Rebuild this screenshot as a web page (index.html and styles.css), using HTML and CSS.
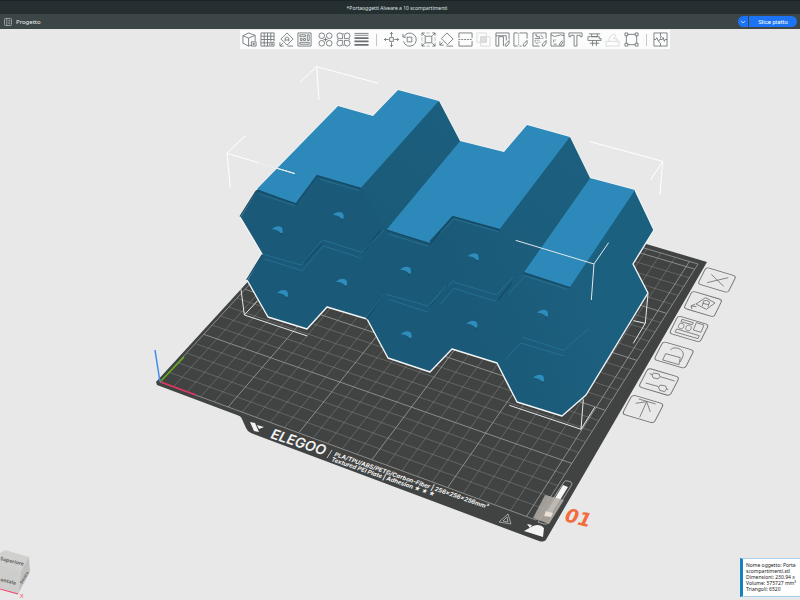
FILE: index.html
```html
<!DOCTYPE html>
<html lang="it">
<head>
<meta charset="utf-8">
<meta name="viewport" content="width=device-width, initial-scale=1">
<title>*Portaoggetti Alveare a 10 scompartimenti</title>
<link rel="stylesheet" href="styles.css">
</head>
<body>
<header class="titlebar"><h1 class="title">*Portaoggetti Alveare a 10 scompartimenti</h1></header>
<nav class="navbar">
  <a class="tab" href="#progetto">
    <svg class="tab-icon" viewBox="0 0 8 8"><rect x=".5" y=".5" width="7" height="7" rx="1"/><path d="M2.8.5v7M4.3 2.3h2M4.3 4h2M4.3 5.7h2"/></svg>
    Progetto
  </a>
  <div class="slice">
    <button class="slice-menu" type="button" aria-label="Opzioni"><svg viewBox="0 0 8 8"><path d="M2 3.2 4 4.8 6 3.2"/></svg></button>
    <button class="slice-run" type="button">Slice piatto</button>
  </div>
</nav>
<main class="workspace" id="progetto">
  <svg class="scene" viewBox="0 29 800 571" preserveAspectRatio="xMinYMin meet">
    <!-- build plate -->
    <path class="plate" d="M157 385 156 382 360 159 707 262 547 538Q545 543 539 541L251 433Q247 431 246 428L242 419Q241 416 237 415Z"/>
    <g id="grid"></g>
    <path class="axis-z" d="M160 382 155 350"/>
    <path class="axis-y" d="M161 381 184 357"/>
    <path class="axis-x" d="M161 382 196 395"/>

    <!-- plate print -->
    <g class="print">
      <path d="M250 422 255 423 259 432 254 431ZM257 425 264 427 259 429Z"/>
      <text class="brand" transform="translate(270 438) rotate(18)">ELEGOO</text>
      <path class="rule" d="M332 450 327 458"/>
      <text class="spec" transform="translate(334 456) rotate(19)">PLA/TPU/ABS/PETG/Carbon-Fiber | 256×256×256mm³</text>
      <text class="spec" transform="translate(331 461) rotate(19)">Textured PEI Plate | Adhesion ★ ★ ★</text>
      <path class="thin" d="M499 522 508 514 511 524ZM503 521 507 517 508 522Z"/>
      <path d="M524 531 533 526Q540 523 544 528L543 537ZM527 524 532 525 530 528Z"/>
      <path class="thin" d="M538 522 564 482Q565 480 568 481L571 482Q573 483 571 486L549 522Q547 525 544 524Z"/>
      <path d="M563 485 568 487 552 513 547 511Z"/>
      <path class="purge" d="M533 518 545 495 564 500 549 524Z"/>
      <path class="purge-tip" d="M546 511 553 513 551 517 544 516Z"/>
    </g>
    <text class="plate-number" transform="translate(564 521) rotate(14)">01</text>

    <!-- controls lying beside the plate -->
    <g class="plate-tool">
      <rect x="-15" y="-10" width="30" height="20" rx="3" transform="matrix(1 .3 -.42 .83 717 280)"/>
      <rect x="-15" y="-10" width="30" height="20" rx="3" transform="matrix(1 .3 -.43 .86 703 304)"/>
      <rect x="-15" y="-10" width="30" height="20" rx="3" transform="matrix(1.02 .3 -.44 .88 689 329)"/>
      <rect x="-15" y="-10" width="30" height="20" rx="3" transform="matrix(1.03 .3 -.46 .9 674 355)"/>
      <rect x="-15" y="-10" width="30" height="20" rx="3" transform="matrix(1.04 .31 -.48 .93 659 382)"/>
      <rect x="-15" y="-10" width="30" height="20" rx="3" transform="matrix(1.05 .31 -.5 .96 643 409)"/>
      <g transform="translate(610 230) scale(.3333)">
        <path d="M304 133 341 169M355 143 291 158"/>
        <path d="M287 203 315 219 289 238 258 222ZM277 228 281 213Q290 208 299 216L294 230M278 220 296 224M259 230 243 228 246 237M243 228 256 222"/>
        <path d="M216 268 250 278 247 284 213 275ZM259 278 282 285 273 307 250 300ZM200 297 268 317 264 326 195 306ZM206 286A8 7 0 1 0 221 290 8 7 0 1 0 206 286M228 292A8 7 0 1 0 243 296 8 7 0 1 0 228 292"/>
        <path d="M167 371 211 383 207 404 158 390ZM181 360Q192 348 211 358 226 367 216 386L211 396"/>
        <path d="M119 431 129 434M150 440 194 453M131 429 147 432 150 440 144 447 129 443 126 435ZM107 459 146 470M170 477 175 479M151 465 167 468 170 477 164 485 149 481 146 472Z"/>
        <path d="M86 507 137 522M110 515 89 562M77 520 110 515 121 546"/>
      </g>
    </g>

    <!-- honeycomb model -->
    <defs>
      <linearGradient id="body" gradientUnits="userSpaceOnUse" x1="470" y1="330" x2="600" y2="290">
        <stop offset="0" stop-color="#1b5978"/><stop offset="1" stop-color="#1c607f"/>
      </linearGradient>
      <linearGradient id="side" x1="0" y1="1" x2="1" y2="0">
        <stop offset="0" stop-color="#1b5a79"/><stop offset="1" stop-color="#1c607f"/>
      </linearGradient>
      <g id="knob"><path class="knob-side" d="M2-4 15-4 11 19Z"/><path class="knob-top" d="M-17-2Q-3-16 13-8 17-4 16 8L10 10Q2-2-17-2Z"/></g>
    </defs>
    <path class="model" fill="url(#body)" d="M398 90 439 101 460 141 504 152 527 125 570 137 590 178 635 190 654 230 633 264 648 293 586 395 562 416 517 402 497 363 452 349 430 372 388 358 367 319 327 307 307 329 268 317 247 280 262 254 240 217 257 189 338 106 373 116Z"/>
    <g class="top">
      <path d="M257 189 338 106 373 116 398 90 439 101 361 188 317 175 296 204Z"/>
      <path d="M460 141 504 152 527 125 570 137 500 229 453 216 430 243 386 230Z"/>
      <path d="M590 178 635 190 570 287 524 272Z"/>
    </g>
    <path fill="url(#side)" d="M439 101 460 141 386 230 361 188ZM570 137 590 178 524 272 500 229Z"/>
    <g transform="translate(215 50) scale(.3333)">
      <path class="shade" d="M125 421 243 462 306 377 437 415M513 540 645 582 714 500M142 614 95 690M75 500 125 421M265 640 322 580M448 603 497 540M455 808 500 741M643 770 700 705"/>
      <path class="seam" d="M133 432 240 467M315 388 432 422M142 612 258 645 323 570 440 607 508 540M148 627 262 662 325 588 440 625M513 733 640 768 718 690M520 748 638 786M455 800 505 735M520 552 640 589"/>
      <use href="#knob" x="187" y="540"/><use href="#knob" x="370" y="497"/><use href="#knob" x="572" y="661"/>
      <use href="#knob" x="380" y="697"/><use href="#knob" x="203" y="731"/><use href="#knob" x="574" y="855"/>
      <path class="bounds faint" d="M255 97 305 50 490 100M305 50 312 150M90 258 36 310 240 371M36 310 46 412"/>
      <path class="bounds" d="M78 718 88 795 277 858M88 795 128 752M130 338 240 371"/>
    </g>
    <g transform="translate(430 100) scale(.3333)">
      <path class="shade" d="M0 425 68 350 210 390M280 519 420 564M205 600 245 548"/>
      <path class="seam" d="M30 400 72 357 205 395M0 612 50 555M72 546 200 585 250 530M32 612 72 565 197 604M235 583 285 528 412 568M278 712 402 751 475 687M225 780 272 729 402 768"/>
      <use href="#knob" x="130" y="471"/><use href="#knob" x="126" y="673"/><use href="#knob" x="338" y="640"/><use href="#knob" x="326" y="835"/>
      <path class="bounds faint" d="M480 125 698 184 662 240M698 184 690 285"/>
      <path class="bounds" d="M257 421 492 492 536 428M492 492 484 600M460 898 453 988 238 916M453 988 494 922M654 582 646 670 610 662M646 670 610 730"/>
    </g>

    <!-- orientation cube -->
    <g class="cube">
      <path class="cube-top" d="M0 553 5 550 29 557 21 571 0 566Z"/>
      <path class="cube-front" d="M0 565 21 571 18 594 0 588Z"/>
      <path class="cube-side" d="M21 571 29 557 30 572 18 594Z"/>
      <text transform="translate(0 560) rotate(14)">Superiore</text>
      <text transform="translate(0 581) rotate(14)">ontale</text>
      <text class="cube-small" transform="translate(22 584) rotate(-60)">Destra</text>
      <path class="cube-axis" d="M0 589 18 594"/>
      <text class="cube-x" x="20" y="598">X</text>
    </g>
  </svg>

  <div class="toolbar" role="toolbar" aria-label="Strumenti">
    <button type="button" aria-label="Aggiungi"><svg viewBox="0 0 16 16"><path d="M1 4 7 1l7 2.5v6M1 4v8l6 3 3-1M1 4l6 2.5L14 3.5M7 6.500V15M10 10.500h5v4.500h-5zM12.500 11.500v2.500M11.200 12.800h2.600"/></svg></button>
    <button type="button" aria-label="Aggiungi piatto"><svg viewBox="0 0 16 16"><path d="M10 15H1V1h14v9M1 4.500h14M1 8h14M1 11.500h9M4.500 1v14M8 1v14M11.500 1v9M10.500 11h4.500v4h-4.500zM12.800 12v2M11.800 13h2"/></svg></button>
    <button type="button" aria-label="Orienta"><svg viewBox="0 0 16 16"><path d="M8.500 1 15 7.500 8.500 14 2 7.500zM6.500 10V6.500Q8.500 4 10.500 6.500V10M6.500 8.500h4M1 11v4h4M1 15l3-3M9 15h6"/></svg></button>
    <button type="button" aria-label="Disponi"><svg viewBox="0 0 16 16"><path d="M1 1h14v14H1zM3 3h6v2H3zM11 3h2v6h-2zM3 11h10v2H3zM3.500 7h2v2h-2zM7 7h2v2H7z"/></svg></button>
    <button class="group" type="button" aria-label="Dividi in oggetti"><svg viewBox="0 0 16 16"><circle cx="4" cy="4" r="3"/><circle cx="12" cy="4" r="3"/><circle cx="4" cy="12" r="3"/><circle cx="12" cy="12" r="3"/><path d="M6 8h4M8 6v4"/></svg></button>
    <button type="button" aria-label="Dividi in parti"><svg viewBox="0 0 16 16"><path d="M7 7H4a3 3 0 1 1 3-3zM9 7V4a3 3 0 1 1 3 3zM7 9v3a3 3 0 1 1-3-3zM9 9h3a3 3 0 1 1-3 3zM7 2h2M7 14h2M2 7v2M14 7v2"/></svg></button>
    <button type="button" aria-label="Altezza strato variabile"><svg viewBox="0 0 16 16"><path d="M.5 1.500h15M.5 3.500h15"/><path class="thick" d="M.5 6.500h15M.5 10h15M.5 13.700h15"/></svg></button>
    <span class="sep"></span>
    <button type="button" aria-label="Sposta"><svg viewBox="0 0 16 16"><path d="M6 6h4v4H6zM8 5V0M6.500 2 8 .5 9.500 2M8 11v5M6.500 14 8 15.500 9.500 14M5 8H0M2 6.500.5 8 2 9.500M11 8h5M14 6.500 15.500 8 14 9.500"/></svg></button>
    <button type="button" aria-label="Ruota"><svg viewBox="0 0 16 16"><path d="M5.500 5.500h5v5h-5zM2 5a7 7 0 1 1-.5 5M1 2v3.500h3.500"/></svg></button>
    <button type="button" aria-label="Scala"><svg viewBox="0 0 16 16"><path d="M4.500 4.500h7v7h-7zM4 4 1 1M1 4V1h3M12 4l3-3M12 1h3v3M4 12l-3 3M1 12v3h3M12 12l3 3M15 12v3h-3"/><path stroke-dasharray="1 1" d="M6 1h4M6 15h4M1 6v4M15 6v4"/></svg></button>
    <button type="button" aria-label="Posiziona sulla faccia"><svg viewBox="0 0 16 16"><path d="M8.500 1 15 7.500 9 13.500 2.500 7zM1 10v4h4M1 14l3-3M8 15h7"/></svg></button>
    <button type="button" aria-label="Taglia"><svg viewBox="0 0 16 16"><path d="M1 6.500V1h14v5.500M1 9.500V15h14V9.500"/><path stroke-dasharray="2 1" d="M.5 8h15"/></svg></button>
    <button type="button" aria-label="Booleana" disabled><svg viewBox="0 0 16 16"><path class="solid" d="M5 5h6v6H5z"/><path d="M1 1h10v10H1zM5 5h10v10H5z"/></svg></button>
    <button type="button" aria-label="Supporti"><svg viewBox="0 0 16 16"><path d="M1 1h14v7M1 1v14h3V5h5v10M1 4h11v5M15 9l-4 4v2h2l2-3z"/></svg></button>
    <button type="button" aria-label="Giunzione"><svg viewBox="0 0 16 16"><path d="M5 1H1v14h4M7 1h8v6M15 9l-4 4v2h2l2-3zM7 15h2"/><path stroke-dasharray="1 1" d="M6 1v14"/></svg></button>
    <button type="button" aria-label="Superficie ruvida"><svg viewBox="0 0 16 16"><path d="M1 1h14v6M1 1v14h7M3 3h2v2h3v2H3M9 3l3 3M3 10l3 3M15 9l-4 4v2h2l2-3z"/><path stroke-dasharray="1 1" d="M3 9h6M6 11h4M9 7h4"/></svg></button>
    <button type="button" aria-label="Colore"><svg viewBox="0 0 16 16"><path d="M1 3V1h14v14H1V3q4 3 7 1t7 0M4 8v3M6 8v1M13 9l-3 4v1h2l2-4M4 13h3"/></svg></button>
    <button type="button" aria-label="Testo"><svg viewBox="0 0 16 16"><path d="M1 1h14v4h-2V3.500H9.500V15h-3V3.500H3V5H1z"/></svg></button>
    <button type="button" aria-label="Misura"><svg viewBox="0 0 16 16"><path d="M2 2h12M5 2v3h6V2M1 5h12v2h2v2H1zM6 9v6M10 9v6M3 12h10"/></svg></button>
    <button type="button" aria-label="Assembla" disabled><svg viewBox="0 0 16 16"><path d="M1 10h14v5H1zM4 10l1-5 4-3 3 2-3 3M9 7h4v3"/></svg></button>
    <button type="button" aria-label="Riempi"><svg viewBox="0 0 16 16"><path d="M4 2.500h8M4 13.500h8M2.500 4v8M13.500 4v8M1 1h3v3H1zM12 1h3v3h-3zM1 12h3v3H1zM12 12h3v3h-3z"/></svg></button>
    <span class="sep"></span>
    <button type="button" aria-label="Vista assieme"><svg viewBox="0 0 16 16"><path d="M1 1h14v14H1zM8 1v3M8 12v3M1 8h2l1-2 2 4 1-2h3l1-2 1 4 1-2h2M8 4l2 2M8 12l-2-2M8 5v2"/></svg></button>
  </div>

  <aside class="info">
    <p>Nome oggetto: Porta<br>scompartimenti.stl</p>
    <p>Dimensioni: 230.94 x</p>
    <p>Volume: 575727 mm³</p>
    <p>Triangoli: 6520</p>
  </aside>
</main>
<script src="grid.js"></script>
</body>
</html>
```
FILE: grid.js
```js
// Draws the 256 mm plate grid (10 mm cells) in perspective.
const [o, x, far, y] = [[160, 382], [536, 520], [698, 264], [360, 164]];
const size = 256;
const sx = o[0] - x[0] + far[0] - y[0];
const sy = o[1] - x[1] + far[1] - y[1];
const dx1 = x[0] - far[0], dx2 = y[0] - far[0];
const dy1 = x[1] - far[1], dy2 = y[1] - far[1];
const det = dx1 * dy2 - dx2 * dy1;
const g = (sx * dy2 - dx2 * sy) / det;
const h = (dx1 * sy - sx * dy1) / det;

function project(mx, my) {
  const u = mx / size, v = my / size, w = g * u + h * v + 1;
  return [0, 1].map(i =>
    ((x[i] - o[i] + g * x[i]) * u + (y[i] - o[i] + h * y[i]) * v + o[i]) / w
  ).map(n => n.toFixed(1)).join(" ");
}

function line(from, to, major) {
  const path = document.createElementNS("http://www.w3.org/2000/svg", "path");
  path.setAttribute("d", `M${project(...from)}L${project(...to)}`);
  path.setAttribute("class", major ? "grid-major" : "grid-minor");
  document.getElementById("grid").append(path);
}

for (let mm = 0; mm <= 250; mm += 10) {
  line([mm, 0], [mm, size], mm % 50 === 0);
  line([0, mm], [size, mm], mm % 50 === 0);
}
line([size, 0], [size, size], true);
line([0, size], [size, size], true);
```
FILE: styles.css
```css
* { box-sizing: border-box; }

body {
  margin: 0;
  min-height: 100vh;
  display: flex;
  flex-direction: column;
  overflow: hidden;
  background: #e8e8e8;
  font-family: "Noto Sans", "Open Sans", sans-serif;
}

button { border: 0; padding: 0; font: inherit; }
svg { fill: none; }

.titlebar {
  height: 14px;
  display: flex;
  align-items: center;
  justify-content: center;
  background: #252f31;
  border-top: 1px solid #1a2325;
}
.title {
  margin: 0;
  padding-right: 6px;
  font-size: 5px;
  line-height: 6px;
  font-weight: 400;
  color: #dfe3e3;
}

.navbar {
  height: 15px;
  padding: 0 3px 0 4px;
  display: flex;
  align-items: center;
  justify-content: space-between;
  background: #3d4646;
}
.tab {
  display: flex;
  align-items: center;
  gap: 4px;
  font-size: 6px;
  line-height: 10px;
  color: #eef0f0;
  text-decoration: none;
}
.tab-icon { width: 8px; height: 8px; stroke: #b9c0c0; stroke-width: .7; }

.slice { display: flex; gap: 1px; height: 11px; }
.slice button { background: #1c74f4; color: #fff; }
.slice-menu { width: 10px; border-radius: 6px 0 0 6px; }
.slice-menu svg { display: block; width: 8px; height: 8px; margin: auto; stroke: #fff; stroke-width: .7; }
.slice .slice-run {
  width: 48px;
  border-radius: 0 6px 6px 0;
  font-family: "Roboto", sans-serif;
  font-size: 6px;
  line-height: 10px;
}

.workspace { position: relative; flex: 1; }
.scene { display: block; width: 100%; }

.toolbar {
  position: absolute;
  top: 1px;
  left: 30%;
  width: 430px;
  height: 19px;
  display: flex;
  align-items: center;
  background: #fcfcfc;
}
.toolbar button { flex: 1; background: none; }
.toolbar .group { margin-left: 2px; }
.toolbar svg { display: block; width: 15px; height: 15px; margin: auto; stroke: #697173; stroke-width: .9; }
.toolbar .thick { stroke-width: 2; }
.toolbar button:disabled { opacity: .25; }
.toolbar .solid { fill: #8a8f90; }
.sep { width: 1px; height: 12px; margin: 0 5px; background: #c4c6c6; }

.info {
  position: absolute;
  right: 0;
  bottom: 3px;
  width: 60px;
  padding: 3px 0 4px 3px;
  overflow: hidden;
  background: #fff;
  border: 1px solid #a9d0ea;
  border-left: 3px solid #1581bd;
  border-right: 0;
  font-size: 5px;
  line-height: 6px;
  color: #222;
  white-space: nowrap;
}
.info p { margin: 0; }

.plate { fill: #414342; }
.grid-minor { stroke: #858786; stroke-width: .5; }
.grid-major { stroke: #9c9e9d; stroke-width: .8; }
.axis-x { stroke: #e2315f; stroke-width: 1.500; }
.axis-y { stroke: #5fae1e; stroke-width: 1.500; }
.axis-z { stroke: #3f8af0; stroke-width: 1.500; }

.print { fill: #f4f4f4; }
.print .thin { fill: none; stroke: #c9c9c9; stroke-width: .7; }
.print .rule { stroke: #e8e8e8; stroke-width: .8; }
.print .purge { fill: #b3ada5; fill-opacity: .85; }
.print .purge-tip { fill: #e9e2d4; }
.brand { font: italic 600 14px "Inter", sans-serif; }
.spec { font: italic 700 6px "Inter", "DejaVu Sans", sans-serif; }
.plate-number { font: italic 700 19px "DejaVu Sans", sans-serif; fill: #f36c40; }

.plate-tool { stroke: #737373; }
.plate-tool rect { stroke-width: .9; }
.plate-tool path { stroke-width: 2.600; }

.model { stroke: #f2f4f5; stroke-width: 1.400; stroke-linejoin: round; }
.top { fill: #2c89b9; }
.shade { stroke: #174b66; stroke-width: 4; }
.seam { stroke: #2a7ca3; stroke-width: 1.800; }
.knob-top { fill: #2d8dbd; }
.knob-side { fill: #174d69; }
.bounds { stroke: #e4e8ea; stroke-width: 3; }
.bounds.faint { stroke: #fff; }

.cube-front { fill: #cdcdcc; }
.cube-top { fill: #d0d0cf; }
.cube-side { fill: #c0c0bf; }
.cube text { font: 700 5px "Noto Sans", sans-serif; fill: #666; }
.cube .cube-small { font-size: 4px; }
.cube .cube-x { font-size: 6px; font-weight: 400; fill: #f0476c; }
.cube-axis { stroke: #ef4068; stroke-width: 1.200; }
```
